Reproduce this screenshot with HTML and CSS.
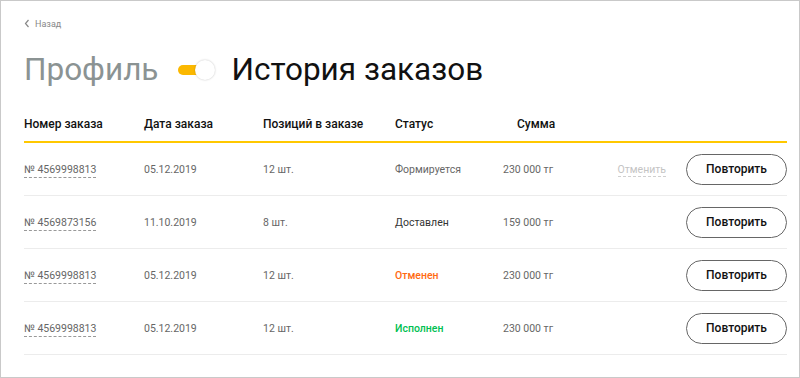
FILE: index.html
```html
<!DOCTYPE html>
<html lang="ru">
<head>
    <meta charset="UTF-8">
    <meta name="viewport" content="width=device-width, initial-scale=1.0">
    <title>История заказов</title>
    <link rel="stylesheet" href="styles.css">
</head>
<body>
    <div class="page">
        <a class="back" href="#">
            <svg width="6" height="9" viewBox="0 0 6 9"><path d="M4.5 1 L1.5 4.5 L4.5 8" fill="none" stroke="#888" stroke-width="1.2"/></svg>
            Назад
        </a>

        <div class="titles">
            <span class="title title-muted">Профиль</span>
            <span class="switch"><span class="switch-knob"></span></span>
            <span class="title">История заказов</span>
        </div>

        <div class="orders">
            <div class="row row-head">
                <div>Номер заказа</div>
                <div>Дата заказа</div>
                <div>Позиций в заказе</div>
                <div>Статус</div>
                <div class="sum">Сумма</div>
                <div></div>
                <div></div>
            </div>

            <div class="row">
                <div><a class="order-link" href="#">№ 4569998813</a></div>
                <div>05.12.2019</div>
                <div>12 шт.</div>
                <div class="status">Формируется</div>
                <div class="sum">230 000 тг</div>
                <div class="cancel-cell"><a class="cancel" href="#">Отменить</a></div>
                <div><button class="btn-repeat">Повторить</button></div>
            </div>

            <div class="row">
                <div><a class="order-link" href="#">№ 4569873156</a></div>
                <div>11.10.2019</div>
                <div>8 шт.</div>
                <div class="status status-delivered">Доставлен</div>
                <div class="sum">159 000 тг</div>
                <div class="cancel-cell"></div>
                <div><button class="btn-repeat">Повторить</button></div>
            </div>

            <div class="row">
                <div><a class="order-link" href="#">№ 4569998813</a></div>
                <div>05.12.2019</div>
                <div>12 шт.</div>
                <div class="status status-canceled">Отменен</div>
                <div class="sum">230 000 тг</div>
                <div class="cancel-cell"></div>
                <div><button class="btn-repeat">Повторить</button></div>
            </div>

            <div class="row">
                <div><a class="order-link" href="#">№ 4569998813</a></div>
                <div>05.12.2019</div>
                <div>12 шт.</div>
                <div class="status status-done">Исполнен</div>
                <div class="sum">230 000 тг</div>
                <div class="cancel-cell"></div>
                <div><button class="btn-repeat">Повторить</button></div>
            </div>
        </div>
    </div>
</body>
</html>
```

FILE: styles.css
```css
html, body {
    margin: 0;
    padding: 0;
}

body {
    font-family: Roboto, "Liberation Sans", sans-serif;
    background: #fff;
    color: #222;
}

.page {
    box-sizing: border-box;
    width: 800px;
    height: 378px;
    border: 1px solid #c9c9c9;
    padding: 12px 12px 0 23px;
}

.back {
    display: inline-flex;
    align-items: center;
    gap: 5px;
    font-size: 9px;
    color: #888;
    text-decoration: none;
}

.titles {
    display: flex;
    align-items: center;
    margin-top: 20px;
    height: 36px;
}

.title {
    font-size: 31.5px;
    color: #111;
    line-height: 36px;
}

.title-muted {
    color: #8b9393;
}

.switch {
    position: relative;
    width: 37px;
    height: 20px;
    margin: 0 16px 0 20px;
}

.switch::before {
    content: "";
    position: absolute;
    left: 0;
    top: 5px;
    width: 24px;
    height: 10px;
    border-radius: 5px;
    background: #fbb800;
}

.switch-knob {
    position: absolute;
    right: 0;
    top: 0;
    width: 20px;
    height: 20px;
    border-radius: 50%;
    background: #fff;
    box-shadow: 0 0 2px rgba(0, 0, 0, 0.25);
}

.orders {
    margin-top: 29px;
}

.row {
    display: grid;
    grid-template-columns: 120px 119px 132px 108px 82px 1fr 101px;
    align-items: center;
    height: 52px;
    border-bottom: 1px solid #ececec;
    font-size: 10.5px;
    color: #666;
}

.row-head {
    height: 24px;
    align-items: start;
    border-bottom: 2px solid #ffc800;
    font-size: 12px;
    font-weight: 500;
    color: #111;
}

.row-head .sum {
    padding-left: 14px;
}

.order-link {
    color: #666;
    text-decoration: none;
    border-bottom: 1px dashed #999;
    padding-bottom: 1px;
}

.status-delivered {
    color: #333;
}

.status-canceled {
    color: #ff6a13;
    font-weight: 500;
}

.status-done {
    color: #00c052;
    font-weight: 500;
}

.cancel-cell {
    text-align: right;
    padding-right: 20px;
}

.cancel {
    color: #c4c4c4;
    text-decoration: none;
    border-bottom: 1px dashed #d0d0d0;
}

.btn-repeat {
    box-sizing: border-box;
    width: 101px;
    height: 31px;
    border: 1px solid #666;
    border-radius: 16px;
    background: #fff;
    font-family: inherit;
    font-size: 12px;
    font-weight: 500;
    color: #111;
    cursor: pointer;
}
```
